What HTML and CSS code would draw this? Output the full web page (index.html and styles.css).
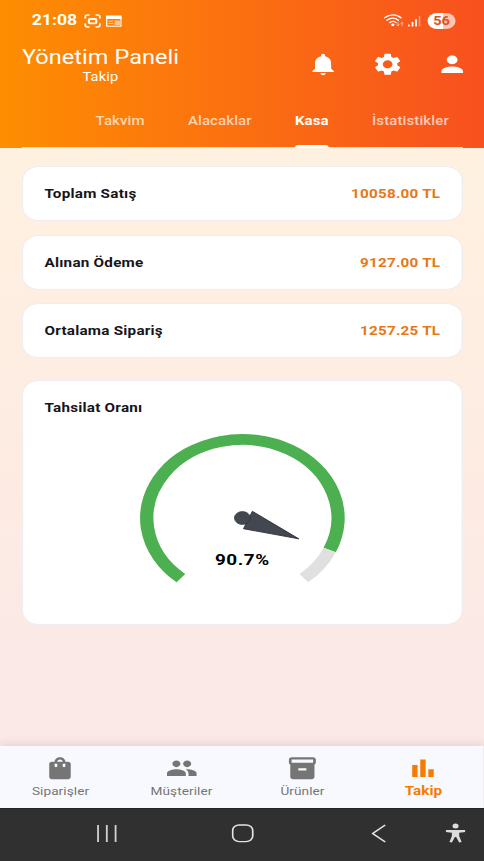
FILE: index.html
```html
<!DOCTYPE html>
<html lang="tr">
<head>
<meta charset="utf-8">
<title>Yönetim Paneli</title>
<link rel="stylesheet" href="styles.css">
</head>
<body>
<div class="screen">
  <header class="header">
    <div class="status">
      <div class="status-left">
        <span class="clock">21:08</span>
        <svg class="capture-icon" width="14" height="14" viewBox="0 0 14 14" fill="none" stroke="#fff" stroke-width="1.5" stroke-linecap="round">
          <path d="M1 4V3a2 2 0 0 1 2-2h1M10 1h1a2 2 0 0 1 2 2v1M13 10v1a2 2 0 0 1-2 2h-1M4 13H3a2 2 0 0 1-2-2v-1"/>
          <rect x="4" y="5" width="6" height="4.3" rx="1" stroke-width="1.8"/>
        </svg>
        <svg class="news-icon" width="13" height="12" viewBox="0 0 13 12">
          <rect x=".6" y="1.4" width="11.8" height="9.8" fill="none" stroke="#fff" stroke-width="1"/>
          <path d="M.2.5h12.400v3.500H.2z" fill="#fff"/>
          <path d="M2 6.200h4M2 8.600h4" stroke="#fff" stroke-opacity=".6"/>
          <path d="M7 5.500h4.500V10H7z" fill="#fff" fill-opacity=".55"/>
        </svg>
      </div>
      <div class="status-right">
        <svg class="wifi-icon" width="17" height="13" viewBox="0 0 17 13" fill="none" stroke="#fff" stroke-width="1.300" stroke-linecap="round">
          <path d="M.8 3.800C5-.2 10.500-.2 14.200 3.800M2.800 6.300c3-2.900 6.500-2.900 9.300 0M5 8.600c1.700-1.600 3.500-1.600 5.100 0"/>
          <circle cx="7.500" cy="10.800" r=".7" fill="#fff"/>
          <path d="M11.800 8.500v3.200m-1-1 1 1 1-1M15 11.700V8.500m-1 1 1-1 1 1" stroke-width=".8" stroke-opacity=".6"/>
        </svg>
        <svg class="signal-icon" width="11" height="11" viewBox="0 0 11 11" fill="#fff">
          <rect x="0" y="8.500" width="1.500" height="2" rx=".5"/>
          <rect x="2.900" y="6" width="1.500" height="4.500" rx=".5"/>
          <rect x="5.800" y="3.300" width="1.500" height="7.200" rx=".5"/>
          <rect x="8.800" y="0" width="1.300" height="10.500" rx=".5" fill-opacity=".4"/>
        </svg>
        <span class="battery">56</span>
      </div>
    </div>
    <div class="topbar">
      <div class="titles">
        <h1 class="title">Yönetim Paneli</h1>
        <span class="subtitle">Takip</span>
      </div>
      <div class="actions">
        <svg class="icon" viewBox="0 0 24 24"><path d="M12 22c1.100 0 2-.9 2-2h-4c0 1.100.89 2 2 2zm6-6v-5c0-3.070-1.640-5.640-4.500-6.320V4c0-.83-.67-1.500-1.500-1.500s-1.500.67-1.500 1.500v.68C7.630 5.360 6 7.920 6 11v5l-2 2v1h16v-1l-2-2z"/></svg>
        <svg class="icon" viewBox="0 0 24 24"><path d="M19.140 12.940c.04-.3.06-.61.06-.94 0-.32-.02-.64-.07-.94l2.030-1.580c.18-.14.23-.41.12-.61l-1.920-3.320c-.12-.22-.37-.29-.59-.22l-2.390.96c-.5-.38-1.030-.7-1.620-.94l-.36-2.540c-.04-.24-.24-.41-.48-.41h-3.840c-.24 0-.43.17-.47.41l-.36 2.540c-.59.24-1.130.57-1.620.94l-2.390-.96c-.22-.08-.47 0-.59.22L2.740 8.870c-.12.21-.08.47.12.61l2.030 1.580c-.05.3-.09.63-.09.94s.02.64.07.94l-2.030 1.580c-.18.14-.23.41-.12.61l1.920 3.320c.12.22.37.29.59.22l2.390-.96c.5.38 1.030.7 1.620.94l.36 2.540c.05.24.24.41.48.41h3.840c.24 0 .44-.17.47-.41l.36-2.540c.59-.24 1.130-.56 1.620-.94l2.390.96c.22.08.47 0 .59-.22l1.920-3.320c.12-.22.07-.47-.12-.61l-2.010-1.580zM12 15.600c-1.980 0-3.600-1.620-3.600-3.600s1.620-3.600 3.600-3.600 3.600 1.620 3.600 3.600-1.620 3.600-3.600 3.600z"/></svg>
        <svg class="icon" viewBox="0 0 24 24"><path d="M12 12c2.210 0 4-1.790 4-4s-1.790-4-4-4-4 1.790-4 4 1.790 4 4 4zm0 2c-2.670 0-8 1.340-8 4v2h16v-2c0-2.660-5.330-4-8-4z"/></svg>
      </div>
    </div>
    <nav class="tabs">
      <span class="tab">Takvim</span>
      <span class="tab">Alacaklar</span>
      <span class="tab active">Kasa</span>
      <span class="tab">İstatistikler</span>
    </nav>
  </header>

  <main class="content">
    <section class="card row"><span>Toplam Satış</span><span class="amount">10058.00 TL</span></section>
    <section class="card row"><span>Alınan Ödeme</span><span class="amount">9127.00 TL</span></section>
    <section class="card row"><span>Ortalama Sipariş</span><span class="amount">1257.25 TL</span></section>
    <section class="card gauge-card">
      <h2 class="card-title">Tahsilat Oranı</h2>
      <svg class="gauge" width="170" height="152" viewBox="-85 -85 170 152">
        <path d="M-50.460 60.130A78.500 78.500 0 1 1 71.710 31.930" fill="none" stroke="#4caf50" stroke-width="11"/>
        <path d="M71.710 31.930A78.500 78.500 0 0 1 50.460 60.130" fill="none" stroke="#e0e0e0" stroke-width="11"/>
        <path d="M8.200-6.700 46.300 20.800.9 10.700z" fill="#434750" stroke="#2b2e36" stroke-width=".8"/>
        <circle r="6.500" fill="#434750" stroke="#2b2e36" stroke-width=".6"/>
        <text class="gauge-value" x="0" y="47" text-anchor="middle">90.7%</text>
      </svg>
    </section>
  </main>

  <nav class="bottom-nav">
    <div class="nav-item">
      <svg class="icon" viewBox="0 0 24 24"><path d="M18 6h-2c0-2.210-1.790-4-4-4S8 3.790 8 6H6c-1.100 0-2 .9-2 2v12c0 1.100.9 2 2 2h12c1.100 0 2-.9 2-2V8c0-1.100-.9-2-2-2zm-8 4c0 .55-.45 1-1 1s-1-.45-1-1V8h2v2zm2-6c1.100 0 2 .9 2 2h-4c0-1.100.9-2 2-2zm4 6c0 .55-.45 1-1 1s-1-.45-1-1V8h2v2z"/></svg>
      <span>Siparişler</span>
    </div>
    <div class="nav-item">
      <svg class="icon" viewBox="0 0 24 24"><path d="M16 11c1.660 0 2.990-1.340 2.990-3S17.660 5 16 5s-3 1.340-3 3 1.340 3 3 3zm-8 0c1.660 0 2.990-1.340 2.990-3S9.660 5 8 5 5 6.340 5 8s1.340 3 3 3zm0 2c-2.330 0-7 1.170-7 3.500V19h14v-2.500c0-2.330-4.670-3.500-7-3.500zm8 0c-.29 0-.62.02-.97.05 1.160.84 1.970 1.970 1.970 3.450V19h6v-2.500c0-2.330-4.670-3.500-7-3.500z"/></svg>
      <span>Müşteriler</span>
    </div>
    <div class="nav-item">
      <svg class="icon" viewBox="0 0 24 24"><path d="M20 2H4c-1 0-2 .9-2 2v3.010c0 .72.43 1.340 1 1.690V20c0 1.100 1.100 2 2 2h14c.9 0 2-.9 2-2V8.700c.57-.35 1-.97 1-1.690V4c0-1.100-1-2-2-2zm-5 12H9v-2h6v2zm5-7H4V4l16-.02V7z"/></svg>
      <span>Ürünler</span>
    </div>
    <div class="nav-item active">
      <svg class="icon" viewBox="0 0 24 24"><path d="M4 9h4v11H4zM16 13h4v7h-4zM10 4h4v16h-4z"/></svg>
      <span>Takip</span>
    </div>
  </nav>

  <footer class="system-bar">
    <svg class="sys recents" width="18" height="19" viewBox="0 0 18 19" stroke="#d0d0d0" stroke-width="1.500"><path d="M1.500 1v17M8.700 1v17M15.900 1v17"/></svg>
    <svg class="sys home" width="19" height="19" viewBox="0 0 19 19" fill="none" stroke="#e4e4e4" stroke-width="1.400"><rect x="1" y="1" width="16.500" height="16.600" rx="5.500"/></svg>
    <svg class="sys back" width="12" height="19" viewBox="0 0 12 19" fill="none" stroke="#e4e4e4" stroke-width="1.500"><path d="M11.300 1 1 9.500 11.300 18"/></svg>
    <svg class="sys person" width="16" height="20" viewBox="0 0 16 20" fill="#dcdcdc"><circle cx="8" cy="3" r="2.500"/><path d="M0 7h16v2l-5 .8v3.300L13 19l-2 .6L8.500 14h-1L5 19.600 3 19l2-5.900V9.800L0 9z"/></svg>
  </footer>
</div>
</body>
</html>
```
FILE: styles.css
```css
* { box-sizing: border-box; margin: 0; padding: 0; }

html, body { width: 484px; height: 861px; overflow: hidden; }

body { font-family: Roboto, "Noto Sans", sans-serif; }

/* The layout uses narrow units, widened horizontally to fill the window. */
.screen {
  width: 398px;
  height: 861px;
  display: flex;
  flex-direction: column;
  transform: scaleX(1.218);
  transform-origin: 0 0;
  background: linear-gradient(180deg, #fff1e0 148px, #fdebe3 500px, #fbe9e7 650px);
}

.header {
  height: 148px;
  display: flex;
  flex-direction: column;
  color: #fff;
  background: linear-gradient(90deg, #fe8e02, #f8501f);
}

.status {
  height: 41px;
  padding: 1px 24px 0 26px;
  display: flex;
  justify-content: space-between;
  align-items: center;
}

.status-left, .status-right { display: flex; align-items: center; }
.clock { font-size: 14.5px; line-height: 18px; font-weight: 700; padding-top: 1px; }
.capture-icon { margin-left: 6px; }
.news-icon { margin-left: 4px; }
.signal-icon { margin: 1px 5.500px 0 2.500px; }

.battery {
  width: 23px;
  height: 16px;
  border-radius: 8px;
  font-size: 12px;
  line-height: 16px;
  font-weight: 700;
  text-align: center;
  color: #dc5426;
  background: linear-gradient(90deg, #fff 56%, #ffc4b2 56%);
}

.topbar {
  height: 51px;
  padding: 0 14px 0 18px;
  display: flex;
  justify-content: space-between;
}

.titles { display: flex; flex-direction: column; align-items: center; padding-top: 5px; }
.title { font-size: 19.3px; font-weight: 400; line-height: 23px; letter-spacing: 0.050px; }
.subtitle { font-size: 12px; line-height: 17px; letter-spacing: 0.150px; }

.actions { display: flex; gap: 26.500px; padding-top: 10px; }
.icon { width: 26.500px; height: 26.500px; fill: currentColor; flex: none; }

.tabs {
  flex: 1;
  margin: 0 18px;
  padding: 0 10.800px 0 60.500px;
  display: flex;
  gap: 35.500px;
  border-bottom: 1px solid #f4dfd5;
}

.tab {
  height: 56px;
  line-height: 61px;
  font-size: 12.3px;
  font-weight: 500;
  letter-spacing: 0.100px;
  color: rgba(255, 255, 255, 0.700);
}

.tab.active {
  position: relative;
  color: #fff;
  font-weight: 700;
}

.tab.active::after {
  content: "";
  position: absolute;
  left: 0;
  right: 0;
  bottom: -1px;
  height: 3px;
  border-radius: 3px 3px 0 0;
  background: #fff;
}

.content { flex: 1; padding: 18px 18px 0; }

.card {
  background: #fff;
  border: 1px solid #efedf0;
  border-radius: 14px;
  font-size: 12.5px;
  font-weight: 700;
  color: #161519;
}

.row {
  height: 55px;
  margin-bottom: 13.500px;
  padding: 0 17.500px;
  display: flex;
  justify-content: space-between;
  align-items: center;
  letter-spacing: 0.200px;
}

.amount { color: #e67817; }

.gauge-card {
  height: 245px;
  margin-top: 21.500px;
  padding: 18px 17.500px;
  display: flex;
  flex-direction: column;
}

.card-title { font-size: 12.5px; line-height: 18px; letter-spacing: 0.200px; }
.gauge { align-self: center; margin-top: 16px; }
.gauge-value { font-size: 15.5px; font-weight: 700; letter-spacing: 0.500px; fill: #000; }

.bottom-nav {
  width: 397.37px;
  height: 62px;
  display: flex;
  background: #f8f9ff;
  box-shadow: 0 -1px 8px rgba(90, 50, 50, 0.150);
}

.nav-item {
  flex: 1;
  display: flex;
  flex-direction: column;
  align-items: center;
  padding-top: 9px;
  font-size: 11.2px;
  line-height: 14px;
  letter-spacing: 0.050px;
  color: #757575;
}
.nav-item span { margin-top: 3.500px; }
.nav-item.active { color: #f57c00; font-size: 12.5px; font-weight: 700; }
.nav-item.active span { margin-top: 2px; }

.system-bar {
  height: 53px;
  padding: 0 16.500px 4px 79px;
  display: flex;
  align-items: center;
  background: #303030;
  border-top: 1px solid #22222a;
}

.home { margin-left: 93px; }
.back { margin-left: 95.500px; }
.person { margin-left: auto; }
```
